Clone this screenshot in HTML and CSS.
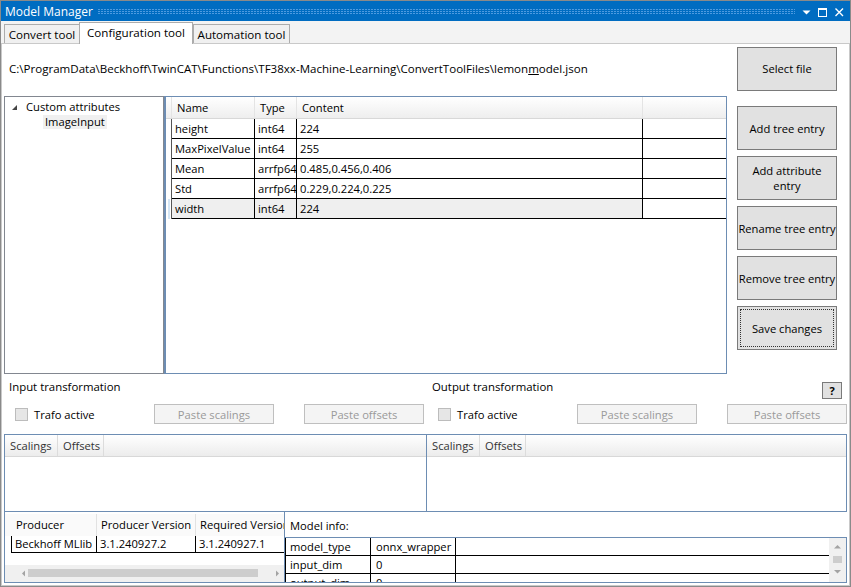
FILE: index.html
```html
<!DOCTYPE html>
<html>
<head>
<meta charset="utf-8">
<title>Model Manager</title>
<link rel="stylesheet" href="styles.css">
</head>
<body>
<div class="window">
  <div class="titlebar">
    <span class="title">Model Manager</span>
    <span class="grip"></span>
    <svg class="caps" width="48" height="20" viewBox="0 0 48 20">
      <path d="M6.5 9.5H14.5L10.5 13.5Z" fill="#fff"/>
      <rect x="22.5" y="8" width="8" height="7.5" fill="none" stroke="#fff"/>
      <rect x="22" y="7" width="9" height="2" fill="#fff"/>
      <path d="M39.5 7.5L47 15M47 7.5L39.5 15" stroke="#fff" stroke-width="1.4"/>
    </svg>
  </div>
  <div class="tabstrip">
    <div class="tab tab-convert">Convert tool</div>
    <div class="tab tab-config active">Configuration tool</div>
    <div class="tab tab-auto">Automation tool</div>
  </div>
  <div class="page">
    <div class="row-path">
      <span class="path">C:\ProgramData\Beckhoff\TwinCAT\Functions\TF38xx-Machine-Learning\ConvertToolFiles\lemon<u>m</u>odel.json</span>
      <button class="btn btn-select">Select file</button>
    </div>

    <div class="row-main">
      <div class="tree">
        <div class="tnode">
          <svg class="expander" width="8" height="8" viewBox="0 0 8 8"><path d="M6 1V6H1Z" fill="#454545"/></svg>
          <span>Custom attributes</span>
        </div>
        <div class="tnode child"><span class="tsel">ImageInput</span></div>
      </div>
      <div class="grid">
        <div class="grow ghead">
          <div class="rh"></div>
          <div class="hc">Name</div>
          <div class="hc">Type</div>
          <div class="hc">Content</div>
          <div class="hc last"></div>
        </div>
        <div class="grow gdata">
          <div class="rh"></div>
          <div class="dc">height</div>
          <div class="dc">int64</div>
          <div class="dc">224</div>
          <div class="dc fill"></div>
        </div>
        <div class="grow gdata">
          <div class="rh"></div>
          <div class="dc">MaxPixelValue</div>
          <div class="dc">int64</div>
          <div class="dc">255</div>
          <div class="dc fill"></div>
        </div>
        <div class="grow gdata">
          <div class="rh"></div>
          <div class="dc">Mean</div>
          <div class="dc">arrfp64</div>
          <div class="dc">0.485,0.456,0.406</div>
          <div class="dc fill"></div>
        </div>
        <div class="grow gdata">
          <div class="rh"></div>
          <div class="dc">Std</div>
          <div class="dc">arrfp64</div>
          <div class="dc">0.229,0.224,0.225</div>
          <div class="dc fill"></div>
        </div>
        <div class="grow gdata sel">
          <div class="rh cur"></div>
          <div class="dc">width</div>
          <div class="dc">int64</div>
          <div class="dc">224</div>
          <div class="dc fill"></div>
        </div>
      </div>
      <div class="btncol">
        <button class="btn">Add tree entry</button>
        <button class="btn">Add attribute<br>entry</button>
        <button class="btn">Rename tree entry</button>
        <button class="btn">Remove tree entry</button>
        <button class="btn focus"><span>Save changes</span></button>
      </div>
    </div>

    <div class="row-trafo">
      <div class="half">
        <div class="hlabel">Input transformation</div>
        <div class="ctrls">
          <label class="chk"><span class="box"></span><span>Trafo active</span></label>
          <button class="btn dis">Paste scalings</button>
          <button class="btn dis">Paste offsets</button>
        </div>
      </div>
      <div class="half">
        <div class="hlabel">Output transformation<button class="btn help">?</button></div>
        <div class="ctrls">
          <label class="chk"><span class="box"></span><span>Trafo active</span></label>
          <button class="btn dis">Paste scalings</button>
          <button class="btn dis">Paste offsets</button>
        </div>
      </div>
    </div>

    <div class="row-scal">
      <div class="panel p-left">
        <div class="phead"><div class="pc c1">Scalings</div><div class="pc c2">Offsets</div></div>
      </div>
      <div class="panel p-right">
        <div class="phead"><div class="pc c1">Scalings</div><div class="pc c2">Offsets</div></div>
      </div>
    </div>

    <div class="row-bottom">
      <div class="producer">
        <div class="prow phdr">
          <div class="prh"></div>
          <div class="ph w1">Producer</div>
          <div class="ph w2">Producer Version</div>
          <div class="ph w3">Required Version</div>
        </div>
        <div class="prow pdat">
          <div class="prh"></div>
          <div class="pd w1">Beckhoff MLlib</div>
          <div class="pd w2">3.1.240927.2</div>
          <div class="pd w3">3.1.240927.1</div>
        </div>
        <div class="hscroll">
          <svg width="279" height="17" viewBox="0 0 279 17">
            <path d="M17 8.5L20 5.5V11.5Z" fill="#a3a3a3"/>
            <rect x="23" y="4" width="230" height="8" fill="#cdcdcd"/>
            <path d="M271 5.5L274 8.5L271 11.5Z" fill="#a3a3a3"/>
          </svg>
        </div>
      </div>
      <div class="modelinfo">
        <div class="mlabel">Model info:</div>
        <div class="mgrid">
          <div class="mrows">
            <div class="mrow"><div class="mc m1">model_type</div><div class="mc m2">onnx_wrapper</div><div class="mc m3"></div></div>
            <div class="mrow"><div class="mc m1">input_dim</div><div class="mc m2">0</div><div class="mc m3"></div></div>
            <div class="mrow"><div class="mc m1">output_dim</div><div class="mc m2">0</div><div class="mc m3"></div></div>
          </div>
          <div class="vscroll">
            <svg width="17" height="45" viewBox="0 0 17 45">
              <path d="M5 10.5L8.5 7L12 10.5Z" fill="#a3a3a3"/>
              <rect x="4" y="18" width="9" height="7" fill="#cdcdcd"/>
              <path d="M5 32L8.5 35.5L12 32Z" fill="#a3a3a3"/>
            </svg>
          </div>
        </div>
      </div>
    </div>
  </div>
</div>
</body>
</html>
```

FILE: styles.css
```css
* { box-sizing: border-box; }

body {
  margin: 0;
  font-family: "Open Sans", "Noto Sans", "Liberation Sans", sans-serif;
  font-size: 11.2px;
  color: #000;
  background: #fff;
}

.window {
  width: 851px;
  height: 587px;
  border: 1px solid #8a8a8a;
  display: flex;
  flex-direction: column;
  background: #f3f3f3;
  overflow: hidden;
}

/* title bar */
.titlebar {
  height: 20px;
  flex: none;
  background: #006cc1;
  color: #fff;
  display: flex;
  align-items: center;
}
.title {
  width: 92px;
  padding-left: 4px;
  font-size: 12px;
  white-space: nowrap;
}
.grip {
  flex: 1;
  height: 6px;
  margin: 0 1px 0 4px;
  background: conic-gradient(from 90deg at 1px 1px, #4d9ae0 25%, transparent 0) 0 0 / 3px 2px;
}
.caps { flex: none; margin-right: 6px; }

/* tabs */
.tabstrip {
  height: 22px;
  flex: none;
  display: flex;
  align-items: flex-end;
  padding-left: 3px;
  background: #f3f3f3;
}
.tab {
  height: 19px;
  border: 1px solid #acacac;
  border-bottom: none;
  background: #f0f0f0;
  display: flex;
  align-items: center;
  justify-content: center;
  white-space: nowrap;
  font-size: 11.6px;
}
.tab-convert { width: 76px; }
.tab-config { width: 114px; }
.tab-auto { width: 97px; }
.tab.active {
  height: 22px;
  margin: 0 0 -1px -1px;
  background: #fff;
  position: relative;
  z-index: 2;
  padding-bottom: 2px;
}

.page {
  flex: 1;
  background: #fff;
  border: 1px solid #c9c9c9;
  display: flex;
  flex-direction: column;
}

/* buttons */
.btn {
  font: inherit;
  color: #000;
  background: #e1e1e1;
  border: 1px solid #7a7a7a;
  padding: 0;
  margin: 0;
  white-space: nowrap;
  line-height: 15px;
}
.btn.dis {
  background: #f4f4f4;
  border-color: #bfbfbf;
  color: #9a9a9a;
  width: 120px;
  height: 20px;
}
.btn.focus {
  padding: 2px;
}
.btn.focus span {
  display: flex;
  width: 100%;
  height: 100%;
  align-items: center;
  justify-content: center;
  border: 1px dotted #333;
}

/* path row */
.row-path {
  height: 52px;
  flex: none;
  display: flex;
  align-items: center;
  padding-bottom: 3px;
}
.path {
  padding-left: 7px;
  white-space: nowrap;
  font-size: 11.55px;
}
.btn-select {
  margin-left: auto;
  margin-right: 12px;
  width: 100px;
  height: 44px;
}

/* main row */
.row-main {
  height: 278px;
  flex: none;
  display: flex;
  padding-left: 2px;
}
.tree {
  width: 160px;
  height: 278px;
  border: 1px solid #828790;
  padding-top: 1px;
}
.tnode {
  height: 16px;
  display: flex;
  align-items: center;
  white-space: nowrap;
}
.expander { margin: 0 7px 0 6px; position: relative; top: 2px; }
.tnode.child { padding-left: 38px; }
.tsel {
  background: #f0f0f0;
  padding: 0 2px;
  line-height: 14px;
}

.grid {
  width: 563px;
  height: 278px;
  border: 1px solid #6d8db3;
  border-left-width: 2px;
}
.grow {
  display: grid;
  grid-template-columns: 6px 83px 42px 346px 1fr;
}
.ghead {
  height: 22px;
  background: linear-gradient(#ffffff, #eeeeee);
  border-bottom: 1px solid #d8d8d8;
}
.hc {
  padding-left: 5px;
  line-height: 21px;
  border-right: 1px solid #e4e4e4;
}
.hc.last { border-right: none; }
.ghead .rh { border-right: 1px solid #e4e4e4; }
.gdata { height: 20px; }
.dc {
  padding-left: 3px;
  line-height: 19px;
  border-bottom: 1px solid #000;
  border-right: 1px solid #000;
  white-space: nowrap;
  overflow: hidden;
}
.gdata .rh { border-right: 1px solid #555; }
.dc.fill { border-right: none; }
.sel .dc { background: #efefef; }
.sel .dc.fill { background: #fff; }
.rh.cur { background: linear-gradient(90deg, #fff 2px, #d3e5f5 2px, #d3e5f5 4px, #fff 4px); }

.btncol {
  margin-left: 10px;
  padding-top: 10px;
  display: flex;
  flex-direction: column;
  gap: 6px;
}
.btncol .btn {
  width: 100px;
  height: 44px;
}

/* transformation row */
.row-trafo {
  height: 60px;
  flex: none;
  display: grid;
  grid-template-columns: 423px 1fr;
  padding-left: 7px;
}
.hlabel {
  margin-top: 3px;
  height: 20px;
  line-height: 20px;
  display: flex;
  justify-content: space-between;
  font-size: 11.4px;
}
.btn.help {
  width: 20px;
  height: 17px;
  margin-top: 5px;
  margin-right: 7px;
  font-weight: bold;
  font-size: 11px;
  line-height: 14px;
}
.ctrls {
  margin-top: 7px;
  height: 20px;
  display: flex;
  align-items: center;
}
.chk {
  width: 145px;
  display: flex;
  align-items: center;
  padding-left: 6px;
  height: 20px;
}
.chk .box {
  width: 13px;
  height: 13px;
  border: 1px solid #bcbcbc;
  background: #e6e6e6;
  margin-right: 6px;
}
.ctrls .btn + .btn { margin-left: 30px; }

/* scalings panels */
.row-scal {
  height: 78px;
  flex: none;
  display: flex;
  padding-left: 2px;
}
.panel {
  height: 78px;
  border: 1px solid #6d8db3;
}
.p-left { width: 423px; }
.p-right { width: 421px; margin-left: -1px; }
.phead {
  height: 22px;
  display: flex;
  background: linear-gradient(#ffffff, #ececec);
  border-bottom: 1px solid #d8d8d8;
}
.pc {
  padding-left: 5px;
  line-height: 21px;
  border-right: 1px solid #dcdcdc;
  color: #333;
}
.pc.c1 { width: 53px; }
.pc.c2 { width: 46px; }

/* bottom row */
.row-bottom {
  height: 73px;
  flex: none;
  display: flex;
  padding-left: 2px;
}
.producer {
  width: 281px;
  height: 71px;
  border: 1px solid #6d8db3;
  border-top: none;
  display: flex;
  flex-direction: column;
  overflow: hidden;
}
.prow {
  display: flex;
  white-space: nowrap;
}
.prh { width: 7px; flex: none; }
.w1 { width: 85px; flex: none; }
.w2 { width: 99px; flex: none; }
.w3 { width: 100px; flex: none; }
.phdr {
  margin-top: 2px;
  height: 22px;
  background: #fafafa;
}
.ph {
  padding-left: 4px;
  line-height: 22px;
  border-right: 1px solid #e2e2e2;
  overflow: hidden;
}
.pdat { height: 17px; }
.pdat .prh { border-right: 1px solid #000; }
.pd {
  padding-left: 3px;
  line-height: 16px;
  border-bottom: 1px solid #000;
  border-right: 1px solid #000;
  overflow: hidden;
}
.hscroll {
  margin-top: auto;
  height: 17px;
  background: #f0f0f0;
}
.hscroll svg { display: block; }

.modelinfo {
  flex: 1;
  margin-right: 2px;
  display: flex;
  flex-direction: column;
}
.mlabel {
  height: 25px;
  line-height: 27px;
  padding-left: 5px;
}
.mgrid {
  margin-left: -1px;
  height: 46px;
  border: 1px solid #6d8db3;
  display: flex;
  overflow: hidden;
}
.mrows { flex: 1; }
.mrow {
  display: grid;
  grid-template-columns: 86px 85px 1fr;
  height: 18px;
}
.mc {
  line-height: 17px;
  border-bottom: 1px solid #000;
  white-space: nowrap;
  overflow: hidden;
}
.m1 { border-left: 1px solid #000; border-right: 1px solid #000; padding-left: 4px; }
.m2 { border-right: 1px solid #000; padding-left: 5px; }
.vscroll {
  width: 17px;
  flex: none;
  background: #f0f0f0;
}
.vscroll svg { display: block; }
```
